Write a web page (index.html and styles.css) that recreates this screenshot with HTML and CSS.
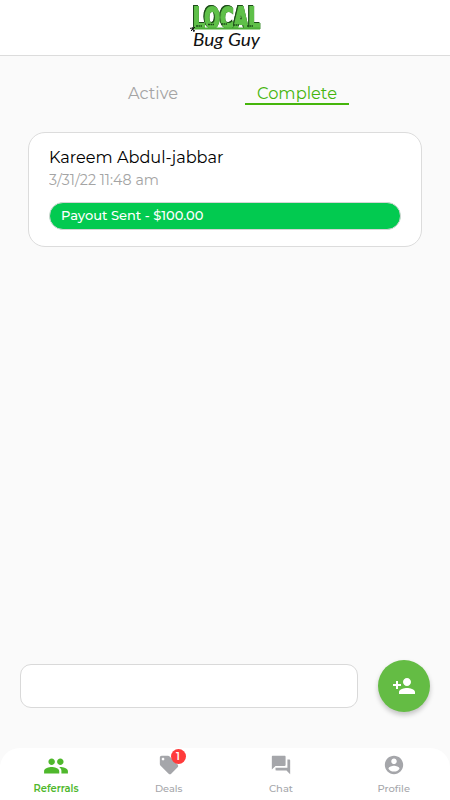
FILE: index.html
```html
<!DOCTYPE html>
<html lang="en">
<head>
<meta charset="utf-8">
<title>Local Bug Guy</title>
<link rel="stylesheet" href="styles.css">
</head>
<body>
<header class="header">
  <svg class="logo" width="74" height="55" viewBox="0 0 74 55">
    <text class="logo-local" x="4" y="28" textLength="67" lengthAdjust="spacingAndGlyphs">LOCAL</text>
    <path class="logo-ground" d="M5 28.500H71"/>
    <path class="logo-bugs" d="M7 26h6M19 24.500h6M32 24h6M44 25h6M58 26h6"/>
    <path class="logo-ant" d="M1 28l5 3M2 31l4-4M3 27l2 5"/>
    <text class="logo-name" x="4" y="46" textLength="67" lengthAdjust="spacingAndGlyphs">Bug Guy</text>
  </svg>
</header>
<main class="main">
  <nav class="tabs">
    <a class="tab"><svg width="52" height="24"><text x="1" y="17.500" textLength="50" lengthAdjust="spacingAndGlyphs">Active</text></svg></a>
    <a class="tab tab-active"><svg width="82" height="24"><text x="1" y="17.500" textLength="80" lengthAdjust="spacingAndGlyphs">Complete</text></svg></a>
  </nav>
  <article class="card">
    <svg class="name" width="180" height="24"><text x="0" y="17" textLength="174.500" lengthAdjust="spacingAndGlyphs">Kareem Abdul-jabbar</text></svg>
    <svg class="date" width="120" height="20"><text x="0" y="14" textLength="110" lengthAdjust="spacingAndGlyphs">3/31/22 11:48 am</text></svg>
    <div class="payout"><svg width="144" height="20"><text x="0" y="13.500" textLength="142.500" lengthAdjust="spacingAndGlyphs">Payout Sent - $100.00</text></svg></div>
  </article>
</main>
<section class="actions">
  <input class="entry" type="text" aria-label="Referral">
  <button class="fab" aria-label="Add referral">
    <svg width="24" height="24" viewBox="0 0 24 24"><path d="M15 12c2.210 0 4-1.790 4-4s-1.790-4-4-4-4 1.790-4 4 1.790 4 4 4zm-9-2V7H4v3H1v2h3v3h2v-3h3v-2H6zm9 4c-2.670 0-8 1.340-8 4v2h16v-2c0-2.660-5.330-4-8-4z"/></svg>
  </button>
</section>
<footer class="nav">
  <a class="item item-active">
    <svg class="icon" width="26" height="26" viewBox="0 0 24 24"><path d="M16 11c1.660 0 2.990-1.340 2.990-3S17.660 5 16 5s-3 1.340-3 3 1.340 3 3 3zm-8 0c1.660 0 2.990-1.340 2.990-3S9.660 5 8 5 5 6.340 5 8s1.340 3 3 3zm0 2c-2.330 0-7 1.170-7 3.500V19h14v-2.500C15 14.170 10.330 13 8 13zm8 0c-.29 0-.62.02-.97.05 1.160.84 1.970 1.970 1.970 3.450V19h6v-2.500c0-2.330-4.670-3.500-7-3.500z"/></svg>
    <svg class="label" width="46" height="14"><text x="0.500" y="10" textLength="45" lengthAdjust="spacingAndGlyphs">Referrals</text></svg>
  </a>
  <a class="item">
    <svg class="icon" width="22" height="22" viewBox="0 0 24 24"><path d="M21.410 11.580l-9-9C12.050 2.220 11.550 2 11 2H4c-1.100 0-2 .9-2 2v7c0 .55.22 1.050.59 1.420l9 9c.36.36.86.58 1.410.58s1.050-.22 1.410-.59l7-7c.37-.36.59-.86.59-1.410s-.23-1.060-.59-1.420zM5.500 7C4.670 7 4 6.330 4 5.500S4.670 4 5.500 4 7 4.670 7 5.500 6.330 7 5.500 7z"/></svg>
    <span class="badge">1</span>
    <svg class="label" width="28" height="14"><text x="0" y="10" textLength="27.500" lengthAdjust="spacingAndGlyphs">Deals</text></svg>
  </a>
  <a class="item">
    <svg class="icon" width="22" height="22" viewBox="0 0 24 24"><path d="M21 6h-2v9H6v2c0 .55.45 1 1 1h11l4 4V7c0-.55-.45-1-1-1zm-4 6V3c0-.55-.45-1-1-1H3c-.55 0-1 .45-1 1v14l4-4h10c.55 0 1-.45 1-1z"/></svg>
    <svg class="label" width="24" height="14"><text x="0" y="10" textLength="24" lengthAdjust="spacingAndGlyphs">Chat</text></svg>
  </a>
  <a class="item">
    <svg class="icon" width="22" height="22" viewBox="0 0 24 24"><path d="M12 2C6.480 2 2 6.480 2 12s4.480 10 10 10 10-4.480 10-10S17.520 2 12 2zm0 3c1.660 0 3 1.340 3 3s-1.340 3-3 3-3-1.340-3-3 1.340-3 3-3zm0 14.200c-2.500 0-4.710-1.280-6-3.220.03-1.990 4-3.080 6-3.080 1.990 0 5.970 1.090 6 3.080-1.290 1.940-3.500 3.220-6 3.220z"/></svg>
    <svg class="label" width="34" height="14"><text x="0.500" y="10" textLength="32.500" lengthAdjust="spacingAndGlyphs">Profile</text></svg>
  </a>
</footer>
</body>
</html>
```
FILE: styles.css
```css
* { box-sizing: border-box; }
body {
  margin: 0;
  height: 800px;
  display: flex;
  flex-direction: column;
  overflow: hidden;
  background: #fafafa;
  font-family: Montserrat, Inter, sans-serif;
}
svg { display: block; fill: currentColor; flex: none; }
.header {
  height: 56px;
  display: flex;
  justify-content: center;
  background: #fff;
  border-bottom: 1px solid #dcdcdc;
}
.logo { margin-left: 2px; overflow: visible; }
.logo-local {
  font: bold 29px "DejaVu Sans", sans-serif;
  fill: #5fc049;
  stroke: #5fc049;
  stroke-width: 2px;
  filter: drop-shadow(.6px .6px 0 #1d4d19) drop-shadow(-.6px -.6px 0 #1d4d19);
}
.logo-ground { stroke: #4cae38; stroke-width: 2; }
.logo-bugs { stroke: #1d4d19; stroke-width: 1.500; stroke-dasharray: 2 .5; }
.logo-ant { stroke: #111; stroke-width: 1; }
.logo-name { font: italic 18px Lato, sans-serif; fill: #111; }
.main { flex: 1; padding: 20px 28px 0; }
.tabs { display: flex; padding-left: 73px; height: 56px; }
.tab {
  width: 104px;
  height: 29px;
  padding-top: 5px;
  display: flex;
  justify-content: center;
  margin-right: 40px;
  color: #a4a4a4;
  font-size: 16.500px;
}
.tab-active { color: #45b50b; border-bottom: 2px solid #45b50b; margin-right: 0; }
.card {
  height: 115px;
  padding: 13px 20px;
  background: #fff;
  border: 1px solid #dcdcdc;
  border-radius: 17px;
}
.name { font-size: 16.500px; color: #000; }
.date { margin-top: 1px; font-size: 14.500px; color: #a4a4a4; }
.payout {
  width: 352px;
  height: 28px;
  margin-top: 11px;
  padding: 3px 11px;
  border: 1px solid #d5d5d5;
  border-radius: 14px;
  background: #02ca50;
  color: #fff;
  font-size: 13px;
  font-weight: 500;
}
.actions {
  height: 52px;
  margin: 0 20px 36px;
  display: flex;
  align-items: center;
  justify-content: space-between;
}
.entry {
  width: 338px;
  height: 44px;
  padding: 0 12px;
  background: #fff;
  border: 1px solid #d9d9d9;
  border-radius: 11px;
}
.fab {
  width: 52px;
  height: 52px;
  padding: 0;
  display: grid;
  place-items: center;
  border: 0;
  border-radius: 50%;
  color: #fff;
  background: #64bc44;
  box-shadow: 0 3px 5px rgba(0, 0, 0, .22);
}
.nav {
  height: 52px;
  display: grid;
  grid-template-columns: repeat(4, 1fr);
  background: #fff;
  border-radius: 20px 20px 0 0;
}
.item {
  position: relative;
  display: flex;
  flex-direction: column;
  align-items: center;
  color: #a5a6aa;
  font-size: 10px;
  font-weight: 500;
}
.icon { margin: 6px 0; }
.item-active { color: #4fb82c; font-weight: 600; }
.item-active .icon { margin: 5px 0 3px; }
.badge {
  position: absolute;
  top: 1px;
  left: 58px;
  width: 15px;
  height: 15px;
  border-radius: 50%;
  background: #ff3b3b;
  color: #fff;
  font-size: 10px;
  font-weight: 600;
  line-height: 15px;
  text-align: center;
}
```
